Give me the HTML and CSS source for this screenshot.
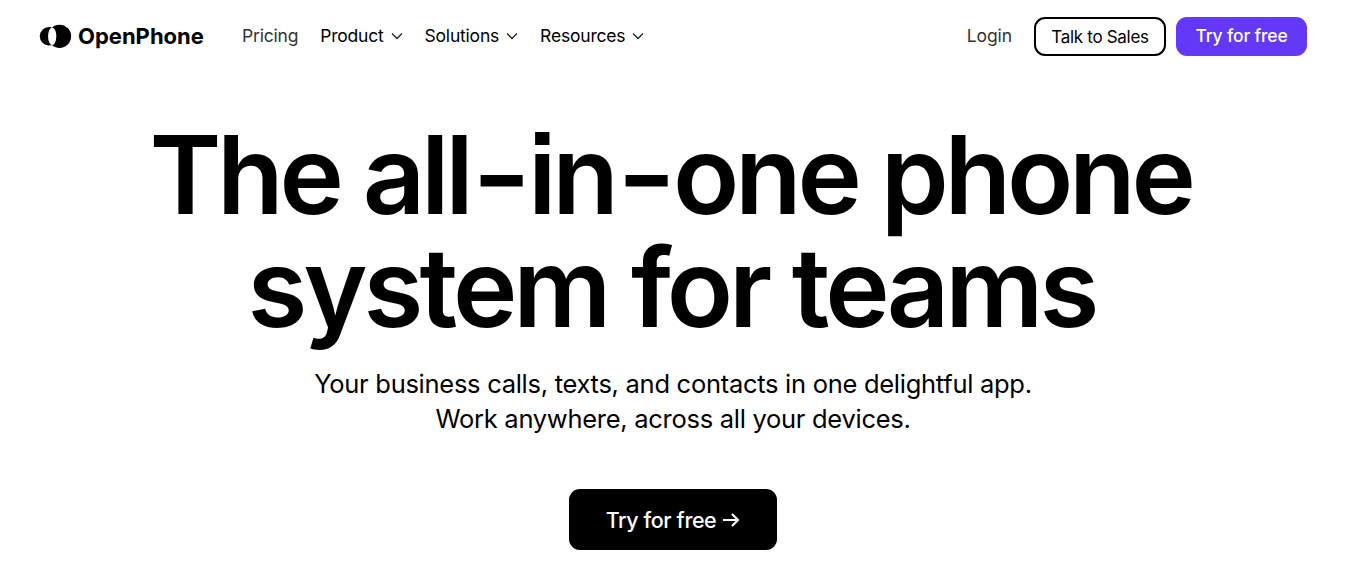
FILE: index.html
```html
<!DOCTYPE html>
<html lang="en">
<head>
    <meta charset="UTF-8">
    <meta name="viewport" content="width=device-width, initial-scale=1.0">
    <title>OpenPhone</title>
    <link rel="stylesheet" href="styles.css">
</head>
<body>
    <header class="navbar">
        <a class="logo" href="#">
            <svg class="logo-mark" width="33" height="24" viewBox="0 0 33 24">
                <circle cx="10" cy="12.3" r="9.2"/>
                <circle cx="20.5" cy="12.3" r="11.6"/>
                <ellipse cx="13.2" cy="12.3" rx="4.1" ry="8.8" fill="#fff"/>
            </svg>
            <span class="logo-text">OpenPhone</span>
        </a>
        <nav class="nav-links">
            <a class="pricing" href="#">Pricing</a>
            <a href="#">Product <svg class="chevron" width="12" height="8" viewBox="0 0 12 8"><path d="M1 1.5l5 5 5-5"/></svg></a>
            <a href="#">Solutions <svg class="chevron" width="12" height="8" viewBox="0 0 12 8"><path d="M1 1.5l5 5 5-5"/></svg></a>
            <a href="#">Resources <svg class="chevron" width="12" height="8" viewBox="0 0 12 8"><path d="M1 1.5l5 5 5-5"/></svg></a>
        </nav>
        <div class="nav-actions">
            <a class="login" href="#">Login</a>
            <a class="btn btn-outline" href="#">Talk to Sales</a>
            <a class="btn btn-primary" href="#">Try for free</a>
        </div>
    </header>

    <main class="hero">
        <h1><span class="line-one">The all<i class="hyphen">-</i>in<i class="hyphen">-</i>one phone</span> <span class="line-two">system for teams</span></h1>
        <p>Your business calls, texts, and contacts in one delightful app.<br>Work anywhere, across all your devices.</p>
        <a class="cta" href="#">Try for free
            <svg width="17" height="16" viewBox="0 0 17 16"><path d="M0 8h15M9 2l6 6-6 6"/></svg>
        </a>
    </main>
</body>
</html>
```
FILE: styles.css
```css
* {
    box-sizing: border-box;
}
body {
    margin: 0;
    background-color: #fff;
    color: #000;
    font-family: Inter, sans-serif;
}
a {
    color: inherit;
    text-decoration: none;
    white-space: nowrap;
}
.navbar {
    display: flex;
    align-items: center;
    height: 72px;
    padding: 0 49px 0 39px;
}
.logo {
    display: flex;
    align-items: center;
    gap: 6px;
    width: 203px;
}
.logo-text {
    font-size: 22px;
    font-weight: 650;
}
.nav-links {
    display: flex;
    gap: 22px;
    padding-bottom: 1px;
    font-size: 17.5px;
    letter-spacing: -0.2px;
}
.nav-links a {
    display: flex;
    align-items: center;
    gap: 7px;
}
.nav-links .pricing,
.login {
    color: #333;
}
.chevron {
    fill: none;
    stroke: #222;
    stroke-width: 1.3;
}
.nav-actions {
    display: flex;
    align-items: center;
    margin-left: auto;
}
.login {
    margin-right: 22px;
    padding-bottom: 1px;
    font-size: 17.5px;
    letter-spacing: -0.1px;
}
.btn {
    display: flex;
    align-items: center;
    justify-content: center;
    height: 39px;
    border-radius: 11px;
}
.btn-outline {
    width: 132px;
    margin-right: 10px;
    padding-top: 2px;
    border: 2px solid #000;
    font-size: 17px;
    letter-spacing: -0.3px;
}
.btn-primary {
    width: 131px;
    padding-bottom: 1px;
    background-color: #6338f6;
    color: #fff;
    font-size: 17.5px;
    font-weight: 500;
    letter-spacing: -0.15px;
}
.hero {
    display: flex;
    flex-direction: column;
    align-items: center;
    width: 1346px;
    padding-top: 46px;
    text-align: center;
}
h1 {
    margin: 0;
    font-size: 109px;
    font-weight: 600;
    line-height: 113px;
    white-space: nowrap;
    font-feature-settings: "ss07";
}
h1 span {
    display: block;
}
.line-one {
    margin-left: -5px;
    letter-spacing: -4.3px;
}
.hyphen {
    display: inline-block;
    margin: 0 6px;
    font-style: normal;
    transform: scaleX(1.18);
}
.line-two {
    margin-left: -3px;
    letter-spacing: -4px;
}
.hero p {
    margin: 22px 0 0;
    font-size: 25.5px;
    line-height: 35px;
    letter-spacing: -0.28px;
}
.cta {
    display: flex;
    align-items: center;
    justify-content: center;
    gap: 7px;
    width: 208px;
    height: 61px;
    margin-top: 53px;
    border-radius: 11px;
    background-color: #000;
    color: #fff;
    font-size: 21.5px;
    font-weight: 500;
    letter-spacing: -0.4px;
}
.cta svg {
    fill: none;
    stroke: #fff;
    stroke-width: 2.2;
}
```
